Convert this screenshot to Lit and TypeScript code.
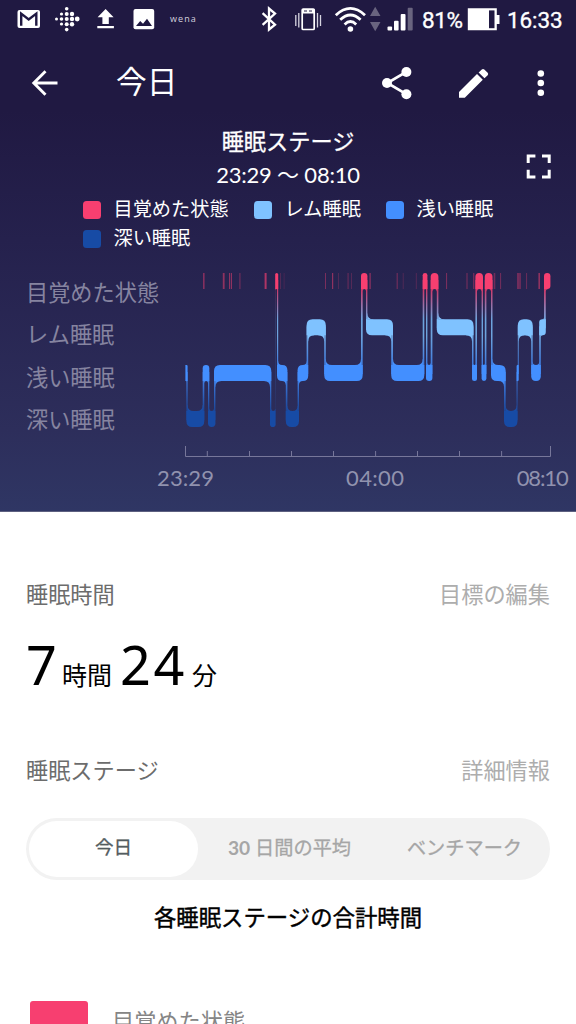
import { LitElement, html, svg, css } from "lit";
import { customElement } from "lit/decorators.js";

type Level = 0 | 1 | 2 | 3;
type Segment = [Level, number, number];

// Top edge of each stage band: awake, REM, light, deep.
const TOP = [273, 319.3, 365, 411];
const BAR = 16;

const SEGMENTS: Segment[] = [
  [2, 185.4, 187.6], [3, 186.4, 204.3], [2, 202.7, 209.3], [3, 208, 215.4],
  [2, 214, 271.3], [3, 270, 275.6], [0, 275.2, 278.2], [2, 277, 287.4],
  [3, 285.8, 299], [2, 297.6, 308.2], [1, 306.6, 325.8], [2, 324.2, 362.7],
  [0, 361, 367.4], [1, 366, 393], [2, 391.2, 424.3], [0, 422.7, 427.4],
  [2, 426, 432.4], [0, 430.7, 438.4], [1, 436.8, 473.5], [2, 472, 477],
  [0, 475.4, 483], [2, 481.6, 486.4], [0, 484.8, 492.5], [2, 491, 505.7],
  [3, 504, 517.5], [2, 516.6, 518.7], [1, 517.8, 532.7], [2, 531.2, 540.8],
  [1, 539.2, 545.8], [0, 544, 550.4],
];

// [x, width, opacity] of the brief awakenings.
const TICKS: [number, number, number][] = [
  [203, 1.6, 0.45], [222.8, 1.8, 0.5], [229, 1, 0.5], [230.8, 1.2, 0.5], [239.3, 1.2, 0.35],
  [264.6, 2, 0.65], [280, 1, 0.2], [283.6, 1, 0.15], [325, 1, 0.4], [332, 1.2, 0.5],
  [338, 1, 0.2], [347.3, 1.6, 0.22], [351, 1, 0.22], [369.4, 1.4, 0.45], [396.6, 1.2, 0.35],
  [402.7, 1, 0.2], [415.8, 1, 0.22], [446, 1.1, 0.4], [466.4, 1.2, 0.35], [473, 1.4, 0.35],
  [493.7, 1.6, 0.35], [500, 1.1, 0.35], [517.2, 1.6, 0.45], [519.3, 1.4, 0.45], [526, 1.1, 0.3],
  [538.4, 1.6, 0.5],
];

function bandShapes() {
  const shapes: unknown[] = [];
  SEGMENTS.forEach(([level, l, r], i) => {
    const prev = SEGMENTS[i - 1];
    const next = SEGMENTS[i + 1];
    const t = TOP[level];
    const b = t + BAR;
    const R = Math.min(6, (r - l) / 2);
    const pu = prev && prev[0] < level, pd = prev && prev[0] > level;
    const nu = next && next[0] < level, nd = next && next[0] > level;
    const tl = pd ? R : 0, bl = pu ? R : 0;
    const tr = nd || (!next && level === 0) ? R : 0;
    const br = nu || !next ? R : 0;
    shapes.push(svg`<path d="M${l + tl} ${t}H${r - tr}Q${r} ${t} ${r} ${t + tr}V${b - br}Q${r} ${b} ${r - br} ${b}H${l + bl}Q${l} ${b} ${l} ${b - bl}V${t + tl}Q${l} ${t} ${l + tl} ${t}Z"/>`);
    const li = prev ? prev[2] : l;
    const ri = next ? next[1] : r;
    const f = Math.max(0, Math.min(6, (ri - li) / 2));
    if (prev && f) {
      const y = pu ? t : b, s = pu ? -1 : 1;
      shapes.push(svg`<path d="M${li - 0.2} ${y - s * 0.2}H${li + f}V${y}Q${li} ${y} ${li} ${y + s * f}H${li - 0.2}Z"/>`);
    }
    if (next && f) {
      const y = nu ? t : b, s = nu ? -1 : 1;
      shapes.push(svg`<path d="M${ri + 0.2} ${y - s * 0.2}H${ri - f}V${y}Q${ri} ${y} ${ri} ${y + s * f}H${ri + 0.2}Z"/>`);
    }
    if (next) {
      const a = Math.min(TOP[level], TOP[next[0]]) + 7;
      const z = Math.max(TOP[level], TOP[next[0]]) + 9;
      const faint = level === 3 && next[0] === 0;
      shapes.push(svg`<rect x=${next[1]} y=${a} width=${r - next[1]} height=${z - a} opacity=${faint ? 0.3 : 0.8}/>`);
    }
  });
  return shapes;
}

const icon = (x: number, y: number, w: number, h: number, body: unknown) =>
  html`<svg width=${w} height=${h} viewBox="${x} ${y} ${w} ${h}" fill="#fff">${body}</svg>`;

const DOTS: [number, number, number][] = [
  [56.5, 19, 1.5], [61.5, 14, 1.6], [61.5, 19, 1.8], [61.5, 24, 1.6],
  [66.7, 8.7, 1.8], [66.7, 14, 2], [66.7, 19, 2], [66.7, 24.3, 2], [66.7, 29.6, 1.8],
  [72, 14, 2.2], [72, 19, 2.2], [72, 24.3, 2.2], [77.2, 19, 2.4],
];

@customElement("app-root")
export class AppRoot extends LitElement {
  static styles = css`
    :host {
      display: block; width: 576px; height: 1024px; overflow: hidden; background: #fff;
      font-family: Lato, "Noto Sans CJK JP", sans-serif; font-size: 22.2px; color: #000;
    }
    svg { display: block; flex: none; }
    .hero {
      height: 512px; box-sizing: border-box; color: #fff; display: flex; flex-direction: column;
      background: linear-gradient(#201942 0, #201942 110px, #25214d 240px, #2d2e5b 430px, #2f3664 511px, #5d6080 511px);
    }
    .status { display: flex; height: 38px; padding-left: 12px; font: 22.5px/40px Roboto, sans-serif; }
    .status .wena { width: 92px; padding-left: 4px; box-sizing: border-box; font: 9px/37px "Open Sans", sans-serif; letter-spacing: 1.1px; color: #d5d2df; }
    .pct { width: 45px; letter-spacing: -.4px; }
    .clock { letter-spacing: -.1px; }
    .pct, .clock { -webkit-text-stroke: .35px #fff; }
    .bar { display: flex; height: 86px; }
    .title { width: 254px; padding-left: 1px; box-sizing: border-box; font: 30.7px/84px "Noto Sans CJK JP", sans-serif; }
    .head { display: grid; grid-template-columns: 1fr auto 1fr; height: 69px; text-align: center; }
    .name { grid-column: 2; line-height: 32px; font-family: "Noto Sans CJK JP", sans-serif; -webkit-text-stroke: .3px #fff; }
    .range { line-height: 37px; font-size: 22px; letter-spacing: -.2px; font-family: Lato, "Noto Sans CJK JP", sans-serif; -webkit-text-stroke: 0; }
    .full { padding: 24px 0 0 161px; }
    .legend { display: flex; flex-wrap: wrap; padding: 1px 60px 0 83px; height: 59px; box-sizing: border-box; font: 19.2px/29px "Noto Sans CJK JP", sans-serif; }
    .key { display: flex; height: 29px; }
    .key i { width: 18px; height: 18px; border-radius: 3.5px; margin: 7px 12.5px 0 0; }
    .key.a { width: 171px; } .key.b { width: 132px; } .key.c { width: 120px; }
    .awake { background: #f73f70; } .rem { background: #7fc2ff; } .light { background: #438fff; } .deep { background: #174ba5; }
    .chart { display: flex; height: 260px; }
    .stages { width: 124px; padding: 20px 0 0 26px; line-height: 42.3px; color: #8684a0; white-space: nowrap; }
    .row { display: flex; justify-content: space-between; padding: 0 26px; color: #6c6c6c; line-height: 32px; }
    .row .link { color: #adadad; }
    .first { padding-top: 67px; }
    .total { display: flex; align-items: baseline; padding: 8px 26px 0; height: 144px; box-sizing: border-box; font: 25px/90px "Noto Sans CJK JP", sans-serif; }
    .num { font-family: "Noto Sans", sans-serif; font-size: 54px; }
    .n7 { width: 36px; } .unit { width: 58px; } .n24 { width: 72px; letter-spacing: 2.5px; }
    .tabs {
      display: grid; grid-template-columns: 169px 183px 167px; margin: 30.5px 26px 0; height: 62px; box-sizing: border-box; padding: 3px;
      border-radius: 31px; background: #f2f2f2; color: #a6a6a6; text-align: center; font-size: 19.2px; line-height: 53px; -webkit-text-stroke: .3px;
    }
    .tab.on { background: #fff; border-radius: 28px; height: 56px; color: #535c60; font-size: 18.6px; }
    .tab b { font-weight: 700; -webkit-text-stroke: 0; }
    .sum { text-align: center; font-size: 22.4px; line-height: 32px; margin-top: 22px; -webkit-text-stroke: .4px; }
    .item { display: flex; padding: 67px 30px 0; color: #858585; }
    .item i { width: 58px; height: 58px; border-radius: 3px; margin-right: 24px; flex: none; }
    .item span { line-height: 32px; padding-top: 5px; }
  `;

  render() {
    return html`
      <section class="hero">
        <div class="status">
          ${icon(12, 0, 36, 38, svg`<rect x="17.5" y="10" width="22.5" height="18" rx="2"/><path d="M21.2 25.8V13.6L28.7 19.5L36.3 13.6V25.8" fill="none" stroke="#201942" stroke-width="2.4"/>`)}
          ${icon(48, 0, 42, 38, DOTS.map(([x, y, r]) => svg`<circle cx=${x} cy=${y} r=${r}/>`))}
          ${icon(90, 0, 34, 38, svg`<path d="M105.6 9L113.6 17.2H108.8V24H102.4V17.2H97.6ZM97.3 26H113.9V28.3H97.3Z"/>`)}
          ${icon(124, 0, 42, 38, svg`<rect x="133.5" y="9" width="20.7" height="20.3" rx="2"/><path d="M136 26L140.2 21L143 23.8L147 18.8L152 26Z" fill="#201942"/>`)}
          <span class="wena">wena</span>
          ${icon(258, 0, 32, 38, svg`<path d="M262.6 13.2L275 24.6L269 29.5V8.5L275 13.5L262.6 24.8" fill="none" stroke="#fff" stroke-width="2.3"/>`)}
          ${icon(290, 0, 40, 38, svg`<path d="M295.8 15V26M298.8 13V27.5M317.5 13V27.5M320.5 15V26" stroke="#d6d4e0" stroke-width="1.3"/><rect x="302.2" y="9" width="12" height="20.5" rx="1" fill="none" stroke="#fff" stroke-width="1.7"/><path d="M302 9H314.5V13.5H302Z"/><path d="M304 11H307M309 11H312" stroke="#201942"/>`)}
          ${icon(330, 0, 38, 38, svg`<g fill="none" stroke="#fff" stroke-width="2.8"><path d="M335.8 15.2Q350.4 1.6 365 15.2M340.2 19.8Q350.4 10.2 360.6 19.8M344.6 24.4Q350.4 18.8 356.2 24.4"/></g><circle cx="350.4" cy="29" r="2.8"/>`)}
          ${icon(368, 0, 17, 38, svg`<path d="M375.2 6.8L380.5 16H370ZM375.2 31.3L380.5 22H370Z" fill="#69647f"/>`)}
          ${icon(385, 0, 37, 38, svg`<rect x="387.5" y="26.5" width="4.6" height="4" rx="1"/><rect x="394" y="20.7" width="4.6" height="9.8" rx="1"/><rect x="400.7" y="14" width="4.8" height="16.5" rx="1"/><rect x="407.7" y="7.8" width="5" height="22.7" rx="1" fill="#69647f"/>`)}
          <span class="pct">81%</span>
          ${icon(467, 0, 40, 38, svg`<path d="M467.8 8.3H496.8V15H499.5V24H496.8V30.2H467.8Z"/><path d="M489 10.4H494.5V28.2H489Z" fill="#201942"/>`)}
          <span class="clock">16:33</span>
        </div>
        <div class="bar">
          ${icon(0, 38, 115, 86, svg`<path d="M57.5 83H34M45.5 71.3L33.8 83L45.5 94.7" fill="none" stroke="#fff" stroke-width="2.9"/>`)}
          <span class="title">今日</span>
          ${icon(369, 38, 76, 86, svg`<path d="M406.3 71.8L387.3 83L406.3 94.2" fill="none" stroke="#fff" stroke-width="2.7"/><circle cx="406.4" cy="72" r="5"/><circle cx="387" cy="83" r="5"/><circle cx="406.4" cy="94.2" r="5"/>`)}
          ${icon(445, 38, 65, 86, svg`<path d="M459 92L477 74L482.8 79.8L464.8 97.8H459ZM478.6 72.4L481.8 69.4Q483 68.4 484.3 69.4L487.7 72.8Q488.7 74 487.7 75.2L484.5 78.3Z"/>`)}
          ${icon(510, 38, 66, 86, svg`<circle cx="540.8" cy="73.5" r="3.3"/><circle cx="540.8" cy="83" r="3.3"/><circle cx="540.8" cy="92.8" r="3.3"/>`)}
        </div>
        <div class="head">
          <div class="name">睡眠ステージ<div class="range">23:29 〜 08:10</div></div>
          <div class="full">${icon(520, 148, 36, 36, svg`<path d="M527.2 163V155.9H534.4M541 155.9H548.2V163M548.2 169.8V176.9H541M534.4 176.9H527.2V169.8" fill="none" stroke="#fff" stroke-width="3"/>`)}</div>
        </div>
        <div class="legend">
          <div class="key a"><i class="awake"></i>目覚めた状態</div>
          <div class="key b"><i class="rem"></i>レム睡眠</div>
          <div class="key c"><i class="light"></i>浅い睡眠</div>
          <div class="key"><i class="deep"></i>深い睡眠</div>
        </div>
        <div class="chart">
          <div class="stages"><div>目覚めた状態</div><div>レム睡眠</div><div>浅い睡眠</div><div>深い睡眠</div></div>
          ${icon(150, 252, 426, 260, svg`
            <defs><linearGradient id="stage" gradientUnits="userSpaceOnUse" x1="0" y1="273" x2="0" y2="427">
              <stop offset="0" stop-color="#f73f70"/><stop offset=".11" stop-color="#f73f70"/>
              <stop offset=".3" stop-color="#7fc2ff"/><stop offset=".41" stop-color="#7fc2ff"/>
              <stop offset=".597" stop-color="#438fff"/><stop offset=".7" stop-color="#438fff"/>
              <stop offset=".896" stop-color="#174ba5"/><stop offset="1" stop-color="#174ba5"/>
            </linearGradient></defs>
            ${TICKS.map(([x, w, o]) => svg`<rect x=${x} y="273" width=${w} height="16" fill="#f73f70" opacity=${o}/>`)}
            <g fill="url(#stage)">${bandShapes()}</g>
            <path d="M185.5 446V456.5H550.5V446M207.3 456V451M249.5 456V451M291.5 456V451M333.5 456V451M375.6 456V451M417.5 456V451M459.5 456V451M501.6 456V451" fill="none" stroke="#77779a"/>
            <g fill="#9192ae" font-size="22" text-anchor="middle">
              <text x="185.5" y="486" textLength="57">23:29</text>
              <text x="375" y="486" textLength="58">04:00</text>
              <text x="542.7" y="486" textLength="52">08:10</text>
            </g>`)}
        </div>
      </section>
      <div class="row first"><span>睡眠時間</span><span class="link">目標の編集</span></div>
      <div class="total"><span class="num n7">7</span><span class="unit">時間</span><span class="num n24">24</span><span>分</span></div>
      <div class="row"><span>睡眠ステージ</span><span class="link">詳細情報</span></div>
      <div class="tabs"><span class="tab on">今日</span><span class="tab"><b>30</b> 日間の平均</span><span class="tab">ベンチマーク</span></div>
      <div class="sum">各睡眠ステージの合計時間</div>
      <div class="item"><i class="awake"></i><span>目覚めた状態</span></div>
    `;
  }
}
